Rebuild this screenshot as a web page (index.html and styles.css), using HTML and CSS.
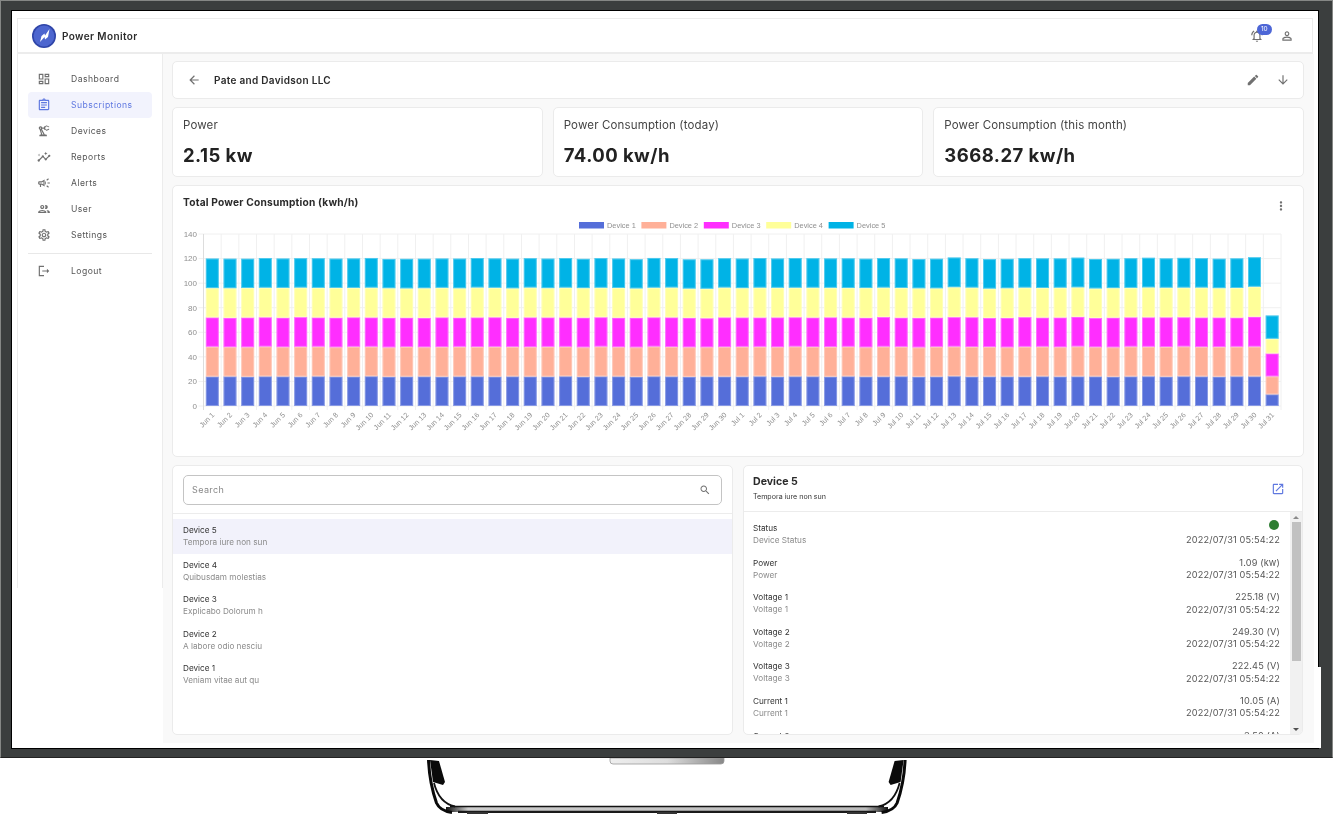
FILE: index.html
```html
<!DOCTYPE html>
<html>
<head>
<meta charset="utf-8">
<title>Power Monitor</title>
<link rel="stylesheet" href="styles.css">
</head>
<body>
<div class="tv">
  <div class="screen">
    <header class="topbar">
      <svg class="logo" viewBox="0 0 24 24"><circle cx="12" cy="12" r="12" fill="#2f45a8"/><circle cx="12" cy="12" r="10.4" fill="#4d66cf"/><path d="M8 18 9.500 12 12.500 9.500 13 11.500 17.500 5 16 13 13 15.500 12.500 13z" fill="#fff"/></svg>
      <span class="brand">Power Monitor</span>
      <span class="top-icons">
        <span class="bell">
          <svg class="icon" viewBox="0 0 24 24"><path d="M7.58 4.08L6.15 2.65C3.75 4.48 2.17 7.3 2.03 10.5h2c.15-2.65 1.51-4.97 3.55-6.42zm12.39 6.42h2c-.15-3.2-1.73-6.02-4.12-7.85l-1.42 1.43c2.02 1.45 3.39 3.77 3.54 6.42zM18 11c0-3.07-1.64-5.64-4.5-6.32V4c0-.83-.67-1.5-1.5-1.5s-1.5.67-1.5 1.5v.68C7.63 5.36 6 7.92 6 11v5l-2 2v1h16v-1l-2-2v-5zm-2 6H8v-6c0-2.48 1.51-4.5 4-4.5s4 2.02 4 4.5v6zm-4 5c1.1 0 2-.9 2-2h-4c0 1.1.9 2 2 2z"/></svg>
          <span class="badge">10</span>
        </span>
        <svg class="icon" viewBox="0 0 24 24"><path d="M12 5.9c1.16 0 2.1.94 2.1 2.1s-.94 2.1-2.1 2.1S9.9 9.16 9.9 8s.94-2.1 2.1-2.1m0 9c2.97 0 6.1 1.46 6.1 2.1v1.1H5.9V17c0-.64 3.13-2.1 6.1-2.1M12 4C9.79 4 8 5.79 8 8s1.79 4 4 4 4-1.79 4-4-1.79-4-4-4zm0 9c-2.67 0-8 1.34-8 4v3h16v-3c0-2.66-5.33-4-8-4z"/></svg>
      </span>
    </header>

    <div class="body">
      <nav class="sidebar">
        <a class="nav-item"><svg class="icon" viewBox="0 0 24 24"><path d="M19 5v2h-4V5h4M9 5v6H5V5h4m10 8v6h-4v-6h4M9 17v2H5v-2h4M21 3h-8v6h8V3zM11 3H3v10h8V3zm10 8h-8v10h8V11zm-10 4H3v6h8v-6z"/></svg>Dashboard</a>
        <a class="nav-item active"><svg class="icon" viewBox="0 0 24 24"><path d="M7 15h7v2H7zm0-4h10v2H7zm0-4h10v2H7zm12-4h-4.18C14.4 1.84 13.3 1 12 1c-1.3 0-2.4.84-2.82 2H5c-.14 0-.27.01-.4.04-.39.08-.74.28-1.01.55-.18.18-.33.4-.43.64-.1.23-.16.49-.16.77v14c0 .27.06.54.16.78s.25.45.43.64c.27.27.62.47 1.01.55.13.02.26.03.4.03h14c1.1 0 2-.9 2-2V5c0-1.1-.9-2-2-2zm-7-.25c.41 0 .75.34.75.75s-.34.75-.75.75-.75-.34-.75-.75.34-.75.75-.75zM19 19H5V5h14v14z"/></svg>Subscriptions</a>
        <a class="nav-item"><svg class="icon" viewBox="0 0 24 24"><path d="M19.93 8.35l-3.6 1.68L14 7.7V6.3l2.33-2.33 3.6 1.68c.38.18.82.01 1-.36.18-.38.01-.82-.36-1l-3.92-1.83c-.38-.18-.83-.1-1.13.2L13.78 4.4c-.18-.24-.46-.4-.78-.4-.55 0-1 .45-1 1v1H8.82C8.4 4.84 7.3 4 6 4 4.34 4 3 5.34 3 7c0 1.1.6 2.05 1.48 2.58L7.08 18H6c-1.1 0-2 .9-2 2v1h13v-1c0-1.1-.9-2-2-2h-1.62L8.41 8.77c.17-.24.31-.49.41-.77H12v1c0 .55.45 1 1 1 .32 0 .6-.16.78-.41l1.74 1.74c.3.3.75.38 1.13.2l3.92-1.83c.38-.18.54-.62.36-1-.18-.37-.62-.54-1-.36zM6 8c-.55 0-1-.45-1-1s.45-1 1-1 1 .45 1 1-.45 1-1 1zm5.11 10H9.17l-2.46-8h.1l4.3 8z"/></svg>Devices</a>
        <a class="nav-item"><svg class="icon" viewBox="0 0 24 24"><path d="M21 8c-1.45 0-2.26 1.44-1.93 2.51l-3.55 3.56c-.3-.09-.74-.09-1.04 0l-2.55-2.55C12.27 10.45 11.46 9 10 9c-1.45 0-2.27 1.44-1.93 2.52l-4.56 4.55C2.44 15.74 1 16.55 1 18c0 1.1.9 2 2 2 1.45 0 2.26-1.44 1.93-2.51l4.55-4.56c.3.09.74.09 1.04 0l2.55 2.55C12.73 16.55 13.54 18 15 18c1.45 0 2.27-1.44 1.93-2.52l3.56-3.55c1.07.33 2.51-.48 2.51-1.93 0-1.1-.9-2-2-2zM15 9l.94-2.07L18 6l-2.06-.93L15 3l-.92 2.07L12 6l2.08.93zM3.5 11L4 9l2-.5L4 8l-.5-2L3 8l-2 .5L3 9z"/></svg>Reports</a>
        <a class="nav-item"><svg class="icon" viewBox="0 0 24 24"><path d="M18 11v2h4v-2h-4zm-2 6.61c.96.71 2.21 1.65 3.2 2.39.4-.53.8-1.07 1.2-1.6-.99-.74-2.24-1.68-3.2-2.4-.4.54-.8 1.08-1.2 1.61zM20.4 5.6c-.4-.53-.8-1.07-1.2-1.6-.99.74-2.24 1.68-3.2 2.4.4.53.8 1.07 1.2 1.6.96-.72 2.21-1.65 3.2-2.4zM4 9c-1.1 0-2 .9-2 2v2c0 1.1.9 2 2 2h1v4h2v-4h1l5 3V6L8 9H4zm5.03 1.71L11 9.53v4.94l-1.97-1.18-.48-.29H4v-2h4.55l.48-.29zM15.5 12c0-1.33-.58-2.53-1.5-3.35v6.69c.92-.81 1.5-2.01 1.5-3.34z"/></svg>Alerts</a>
        <a class="nav-item"><svg class="icon" viewBox="0 0 24 24"><path d="M9 13.75c-2.34 0-7 1.17-7 3.5V19h14v-1.75c0-2.33-4.66-3.5-7-3.5zM4.34 17c.84-.58 2.87-1.25 4.66-1.25s3.82.67 4.66 1.25H4.34zM9 12c1.93 0 3.5-1.57 3.5-3.5S10.93 5 9 5 5.5 6.57 5.5 8.5 7.07 12 9 12zm0-5c.83 0 1.5.67 1.5 1.5S9.83 10 9 10s-1.5-.67-1.5-1.5S8.17 7 9 7zm7.04 6.81c1.16.84 1.96 1.96 1.96 3.44V19h4v-1.75c0-2.02-3.5-3.17-5.96-3.44zM15 12c1.93 0 3.5-1.57 3.5-3.5S16.93 5 15 5c-.54 0-1.04.13-1.5.35.63.89 1 1.98 1 3.15s-.37 2.26-1 3.15c.46.22.96.35 1.5.35z"/></svg>User</a>
        <a class="nav-item"><svg class="icon" viewBox="0 0 24 24"><path d="M19.43 12.98c.04-.32.07-.64.07-.98 0-.34-.03-.66-.07-.98l2.11-1.65c.19-.15.24-.42.12-.64l-2-3.46c-.09-.16-.26-.25-.44-.25-.06 0-.12.01-.17.03l-2.49 1c-.52-.4-1.08-.73-1.69-.98l-.38-2.65C14.46 2.18 14.25 2 14 2h-4c-.25 0-.46.18-.49.42l-.38 2.65c-.61.25-1.17.59-1.69.98l-2.49-1c-.06-.02-.12-.03-.18-.03-.17 0-.34.09-.43.25l-2 3.46c-.13.22-.07.49.12.64l2.11 1.65c-.04.32-.07.65-.07.98 0 .33.03.66.07.98l-2.11 1.65c-.19.15-.24.42-.12.64l2 3.46c.09.16.26.25.44.25.06 0 .12-.01.17-.03l2.49-1c.52.4 1.08.73 1.69.98l.38 2.65c.03.24.24.42.49.42h4c.25 0 .46-.18.49-.42l.38-2.65c.61-.25 1.17-.59 1.69-.98l2.49 1c.06.02.12.03.18.03.17 0 .34-.09.43-.25l2-3.46c.12-.22.07-.49-.12-.64l-2.11-1.65zm-1.98-1.71c.04.31.05.52.05.73 0 .21-.02.43-.05.73l-.14 1.13.89.7 1.08.84-.7 1.21-1.27-.51-1.04-.42-.9.68c-.43.32-.84.56-1.25.73l-1.06.43-.16 1.13-.2 1.35h-1.4l-.19-1.35-.16-1.13-1.06-.43c-.43-.18-.83-.41-1.23-.71l-.91-.7-1.06.43-1.27.51-.7-1.21 1.08-.84.89-.7-.14-1.13c-.03-.31-.05-.54-.05-.74s.02-.43.05-.73l.14-1.13-.89-.7-1.08-.84.7-1.21 1.27.51 1.04.42.9-.68c.43-.32.84-.56 1.25-.73l1.06-.43.16-1.13.2-1.35h1.39l.19 1.35.16 1.13 1.06.43c.43.18.83.41 1.23.71l.91.7 1.06-.43 1.27-.51.7 1.21-1.07.85-.89.7.14 1.13zM12 8c-2.21 0-4 1.79-4 4s1.79 4 4 4 4-1.79 4-4-1.79-4-4-4zm0 6c-1.1 0-2-.9-2-2s.9-2 2-2 2 .9 2 2-.9 2-2 2z"/></svg>Settings</a>
        <hr class="nav-rule">
        <a class="nav-item"><svg class="icon" viewBox="0 0 24 24"><path d="M5 5h7V3H3v18h9v-2H5zM21 12l-4-4v3H9v2h8v3z"/></svg>Logout</a>
      </nav>

      <main class="main">
        <section class="card page-head">
          <svg class="icon" viewBox="0 0 24 24"><path d="M20 11H7.83l5.59-5.59L12 4l-8 8 8 8 1.41-1.41L7.83 13H20v-2z"/></svg>
          <h1>Pate and Davidson LLC</h1>
          <svg class="icon push" viewBox="0 0 24 24"><path d="M3 17.25V21h3.75L17.81 9.94l-3.75-3.75L3 17.25zM20.71 7.04c.39-.39.39-1.02 0-1.41l-2.34-2.34a.9959.9959 0 0 0-1.41 0l-1.83 1.83 3.75 3.75 1.83-1.83z"/></svg>
          <svg class="icon" viewBox="0 0 24 24"><path d="M20 12l-1.41-1.41L13 16.17V4h-2v12.17l-5.58-5.59L4 12l8 8 8-8z"/></svg>
        </section>

        <section class="stats">
          <div class="card stat"><div class="stat-label">Power</div><div class="stat-value">2.15 kw</div></div>
          <div class="card stat"><div class="stat-label">Power Consumption (today)</div><div class="stat-value">74.00 kw/h</div></div>
          <div class="card stat"><div class="stat-label">Power Consumption (this month)</div><div class="stat-value">3668.27 kw/h</div></div>
        </section>

        <section class="card chart-card">
          <div class="chart-head">
            <h2>Total Power Consumption (kwh/h)</h2>
            <svg class="icon" viewBox="0 0 24 24"><path d="M12 8c1.1 0 2-.9 2-2s-.9-2-2-2-2 .9-2 2 .9 2 2 2zm0 2c-1.1 0-2 .9-2 2s.9 2 2 2 2-.9 2-2-.9-2-2-2zm0 6c-1.1 0-2 .9-2 2s.9 2 2 2 2-.9 2-2-.9-2-2-2z"/></svg>
          </div>
          <div id="chart"></div>
        </section>

        <section class="bottom">
          <div class="card devices">
            <div class="search-wrap">
              <div class="search">
                <span>Search</span>
                <svg class="icon" viewBox="0 0 24 24"><path d="M15.5 14h-.79l-.28-.27C15.41 12.59 16 11.11 16 9.5 16 5.91 13.09 3 9.5 3S3 5.91 3 9.5 5.91 16 9.5 16c1.61 0 3.09-.59 4.23-1.57l.27.28v.79l5 4.99L20.49 19l-4.99-5zm-6 0C7.01 14 5 11.99 5 9.5S7.01 5 9.5 5 14 7.01 14 9.5 11.99 14 9.5 14z"/></svg>
              </div>
            </div>
            <ul class="device-list">
              <li class="selected"><b>Device 5</b><i>Tempora iure non sun</i></li>
              <li><b>Device 4</b><i>Quibusdam molestias</i></li>
              <li><b>Device 3</b><i>Explicabo Dolorum h</i></li>
              <li><b>Device 2</b><i>A labore odio nesciu</i></li>
              <li><b>Device 1</b><i>Veniam vitae aut qu</i></li>
            </ul>
          </div>

          <div class="card detail">
            <div class="detail-head">
              <div>
                <h3>Device 5</h3>
                <p>Tempora iure non sun</p>
              </div>
              <svg class="icon" viewBox="0 0 24 24"><path d="M19 19H5V5h7V3H5c-1.11 0-2 .9-2 2v14c0 1.1.89 2 2 2h14c1.1 0 2-.9 2-2v-7h-2v7zM14 3v2h3.59l-9.83 9.83 1.41 1.41L19 6.41V10h2V3h-7z"/></svg>
            </div>
            <div class="detail-body">
              <div class="readings">
                <div class="reading"><div><b>Status</b><i>Device Status</i></div><div class="reading-val"><span class="dot"></span><em>2022/07/31 05:54:22</em></div></div>
                <div class="reading"><div><b>Power</b><i>Power</i></div><div class="reading-val"><span>1.09 (kw)</span><em>2022/07/31 05:54:22</em></div></div>
                <div class="reading"><div><b>Voltage 1</b><i>Voltage 1</i></div><div class="reading-val"><span>225.18 (V)</span><em>2022/07/31 05:54:22</em></div></div>
                <div class="reading"><div><b>Voltage 2</b><i>Voltage 2</i></div><div class="reading-val"><span>249.30 (V)</span><em>2022/07/31 05:54:22</em></div></div>
                <div class="reading"><div><b>Voltage 3</b><i>Voltage 3</i></div><div class="reading-val"><span>222.45 (V)</span><em>2022/07/31 05:54:22</em></div></div>
                <div class="reading"><div><b>Current 1</b><i>Current 1</i></div><div class="reading-val"><span>10.05 (A)</span><em>2022/07/31 05:54:22</em></div></div>
                <div class="reading"><div><b>Current 2</b><i>Current 2</i></div><div class="reading-val"><span>3.50 (A)</span><em>2022/07/31 05:54:22</em></div></div>
              </div>
              <div class="scrollbar">
                <span class="arrow-up"></span>
                <span class="thumb"></span>
                <span class="arrow-down"></span>
              </div>
            </div>
          </div>
        </section>
      </main>
    </div>
  </div>
  <span class="notch"></span>
</div>

<svg class="stand" viewBox="0 758 1334 60">
  <defs>
    <linearGradient id="tab" x1="0" x2="1"><stop offset="0" stop-color="#eee"/><stop offset=".5" stop-color="#ddd"/><stop offset="1" stop-color="#888"/></linearGradient>
    <linearGradient id="rail" x1="0" x2="1"><stop offset="0" stop-color="#111"/><stop offset=".05" stop-color="#ccc"/><stop offset=".95" stop-color="#bbb"/><stop offset="1" stop-color="#111"/></linearGradient>
  </defs>
  <path d="M610 758h114v3q0 3-3 3H613q-3 0-3-3z" fill="url(#tab)" stroke="#999" stroke-width=".8"/>
  <path d="M446 807H888V812H446z" fill="url(#rail)"/>
  <path d="M450 806.500H884" stroke="#111" stroke-width="1.400" fill="none"/>
  <path d="M458 811.800H876" stroke="#1a1a1a" stroke-width="2.200" fill="none"/>
  <g id="leg">
    <path d="M428.500 760Q429.500 783 436.500 803Q440 811 452 812.500" fill="none" stroke="#0a0a0a" stroke-width="3"/>
    <path d="M434 783Q439 803 455 806.500" fill="none" stroke="#111" stroke-width="1.800"/>
    <path d="M430 760 439 761 445 782 443 785 433 782z" fill="#0a0a0a"/>
  </g>
  <use href="#leg" transform="translate(1333.600 0) scale(-1 1)"/>
  <path d="M467 812h21v2h-21zM657 812h20v2h-20zM847 812h20v2h-20z" fill="#333"/>
</svg>
<script src="chart.js"></script>
</body>
</html>
```

FILE: styles.css
```css
* {box-sizing: border-box;}
body {margin: 0; background: #fff; font-family: "Inter", "Liberation Sans", sans-serif; color: #2b2b2b; overflow: hidden;}
h1, h2, h3, p, ul {margin: 0; padding: 0;}
i, em {font-style: normal;}

.tv {position: relative; width: 1333px; height: 758px; padding: 10px 14px 10px 11px; background: #3b3e3e; border: 1px solid #858785; border-bottom-color: #222;}
.screen {height: 737px; padding: 7px 5px 0; background: #fff; outline: 1px solid #000; filter: blur(.4px);}
.notch {position: absolute; left: 1317px; top: 666px; width: 3px; height: 81px; background: #fff;}
.stand {display: block; width: 1334px; height: 60px;}

.icon {width: 14px; height: 14px; fill: #707070; flex: none;}

.topbar {display: flex; align-items: center; height: 36px; padding: 0 18px 0 14px; border: 1px solid #ececec; border-bottom-width: 2px;}
.logo {width: 24px; height: 24px; margin-right: 6px;}
.brand {font-size: 10px; font-weight: 600; letter-spacing: .4px;}
.top-icons {display: flex; align-items: center; gap: 16px; margin-left: auto;}
.bell {position: relative; display: flex;}
.badge {position: absolute; left: 6.5px; top: -5px; width: 15.5px; height: 11px; border-radius: 6px; background: #4d66d6; color: #fff; font-size: 6.5px; line-height: 11px; text-align: center;}

.body {display: flex; align-items: flex-start;}
.sidebar {flex: none; width: 146px; height: 534px; padding: 12px 10px 0; border-left: 1px solid #ececec; border-right: 1px solid #ececec;}
.nav-item {display: flex; align-items: center; gap: 20px; height: 26px; padding-left: 9px; border-radius: 4px; font-size: 8.6px; letter-spacing: .45px; color: #555;}
.nav-item.active {background: #f2f3fd; color: #5f78e0;}
.nav-item.active .icon {fill: #5f78e0;}
.nav-rule {height: 1px; margin: 5px 0 4px; border: 0; background: #e8e8e8;}

.main {flex: 1; display: flex; flex-direction: column; gap: 8px; height: 689px; padding: 7px 10px 8px 9px; background: #f9f9f9;}
.card {background: #fff; border: 1px solid #ebebeb; border-radius: 5px;}

.page-head {display: flex; align-items: center; height: 38px; padding: 0 13px 0 14px;}
.page-head h1 {margin-left: 13px; font-size: 10px; font-weight: 600; letter-spacing: .3px;}
.page-head .icon + .icon {margin-left: 16px;}
.page-head .push {margin-left: auto !important;}

.stats {display: grid; grid-template-columns: repeat(3, 1fr); gap: 10px; height: 70px;}
.stat {padding: 10px 10px 0;}
.stat-label {font-size: 11.5px; line-height: 14px; letter-spacing: .15px; color: #444;}
.stat-value {margin-top: 12px; font-size: 18.5px; line-height: 22px; font-weight: 700; letter-spacing: .45px; color: #222;}

.chart-card {height: 272px;}
.chart-head {display: flex; justify-content: space-between; align-items: center; height: 28px; padding: 4px 15px 0 10px;}
.chart-head h2 {font-size: 10.2px; font-weight: 700; letter-spacing: .2px;}
.chart-head .icon {margin-top: 8px;}
#chart svg {display: block;}
.chart-text {font-family: "Liberation Sans", sans-serif; fill: #8f8f8f;}

.bottom {display: grid; grid-template-columns: 561px 560px; gap: 10px; height: 270px;}
.devices, .detail {overflow: hidden;}
.search-wrap {padding: 9px 10px 8px; border-bottom: 1px solid #ececec;}
.search {display: flex; align-items: center; justify-content: space-between; height: 30px; padding: 0 10px 1px 8px; border: 1px solid #c4c4c4; border-radius: 5px; font-size: 9px; letter-spacing: .4px; color: #888;}
.search .icon {width: 12px; height: 12px;}
.device-list {list-style: none; padding-top: 5px;}
.device-list li {height: 34.5px; padding: 5px 10px 0;}
.device-list li.selected {background: #f2f2fb;}
.device-list b, .reading b {display: block; font-size: 8.2px; line-height: 12px; font-weight: 400; color: #333;}
.device-list i, .reading i {display: block; font-size: 8.2px; line-height: 12px; color: #8b8b8b;}

.detail-head {display: flex; justify-content: space-between; align-items: center; height: 46px; padding: 0 17px 0 9px; border-bottom: 1px solid #ececec;}
.detail-head h3 {font-size: 10.6px; line-height: 14px; font-weight: 700;}
.detail-head p {margin-top: 3px; font-size: 7.1px; line-height: 10px; color: #333;}
.detail-head .icon {fill: #5f78e0;}
.detail-body {display: flex; height: 222px; overflow: hidden;}
.readings {flex: 1; padding: 10px 10px 0 9px;}
.reading {display: flex; justify-content: space-between; height: 34.6px;}
.reading-val {display: flex; flex-direction: column; align-items: flex-end; font-size: 9.2px; line-height: 12px; letter-spacing: .13px; color: #555;}
.dot {width: 10px; height: 10px; margin-top: -2px; margin-bottom: 3.5px; margin-right: 1px; border-radius: 50%; background: #2e7d32;}
.reading-val em {margin-top: .5px;}
.scrollbar {display: flex; flex-direction: column; align-items: center; flex: none; width: 12px; background: #f1f1f1;}
.thumb {width: 9px; height: 139px; margin-top: 3px; background: #c1c1c1;}
.arrow-up {margin-top: 4px; border: 3px solid transparent; border-top: 0; border-bottom: 3px solid #8a8a8a;}
.arrow-down {margin-top: auto; margin-bottom: 3px; border: 3px solid transparent; border-bottom: 0; border-top: 3px solid #505050;}
```

FILE: chart.js
```js
// bar totals read per day, jun 1 - jul 30
var totals = [120,119.8,120.1,120.3,120.1,120.5,120.1,120.1,120.2,120.3,119.9,119.7,119.8,120.3,119.8,
  120.5,120.3,119.7,120.5,120,120.3,120,120.3,120,119.7,120.3,120.5,119.5,119.2,120.5,
  120,120.3,120.3,120.3,120.3,120.3,120,120,120.5,120,
  119.8,119.8,120.8,120.5,119.4,119.8,120.5,120,120.3,120.8,119.5,120,
  120.2,120.6,120.4,120.4,120.4,120,120,121.3];
var colors = ["#556ed9", "#ffb098", "#ff2eff", "#ffff99", "#00b3e6"];
var ns = "http://www.w3.org/2000/svg";
var svg = document.createElementNS(ns, "svg");
var left = 203.5, right = 1281, top0 = 234, base = 406, step = (right - left) / 61, unit = (base - top0) / 140;
svg.setAttribute("viewBox", "173 214 1130 241");
svg.setAttribute("width", 1130);
svg.setAttribute("height", 241);

function add(tag, attrs, text) {
  var el = document.createElementNS(ns, tag);
  for (var k in attrs) el.setAttribute(k, attrs[k]);
  if (text) el.textContent = text;
  svg.appendChild(el);
}

// grid
for (var v = 0; v <= 140; v += 20) {
  var y = base - v * unit;
  add("line", {x1: left - 5, x2: right, y1: y, y2: y, stroke: "#f0f0f0"});
  add("text", {x: left - 6.5, y: y + 2.8, "text-anchor": "end", "font-size": 8, "class": "chart-text"}, String(v));
}
var labels = [];
for (var d = 1; d <= 30; d++) labels.push("Jun " + d);
for (d = 1; d <= 31; d++) labels.push("Jul " + d);
for (var i = 0; i <= 61; i++) {
  var x = left + i * step;
  add("line", {x1: x, x2: x, y1: top0, y2: base + 4, stroke: i == 0 ? "#dddddd" : "#f0f0f0"});
}

// bars
labels.forEach(function (label, i) {
  var cx = left + (i + .5) * step, y = base, vals;
  if (i == 60) {
    vals = [9.5, 14.6, 18.7, 11.9, 19];
  } else {
    vals = [0, 1, 2, 3, 4].map(function (s) {
      return totals[i] / 5 + .18 * Math.sin(i * 2.3 + s * 1.7);
    });
  }
  vals.forEach(function (val, s) {
    var h = val * unit;
    add("rect", {x: cx - 6.5, y: y - h, width: 13, height: h, fill: colors[s]});
    add("rect", {x: cx - 6, y: y - h + .5, width: 12, height: h - 1, fill: "none", stroke: "#fff", "stroke-opacity": .3});
    y -= h;
  });
  add("text", {transform: "translate(" + (cx + 2.5) + " " + (base + 9.5) + ") rotate(-45)", "text-anchor": "end", "font-size": 7.2, "class": "chart-text"}, label);
});

// legend
colors.forEach(function (c, s) {
  var x = 579 + s * 62.4;
  add("rect", {x: x, y: 222, width: 25, height: 6.5, fill: c});
  add("text", {x: x + 28, y: 227.5, "font-size": 7.4, "class": "chart-text"}, "Device " + (s + 1));
});

document.getElementById("chart").appendChild(svg);
```
